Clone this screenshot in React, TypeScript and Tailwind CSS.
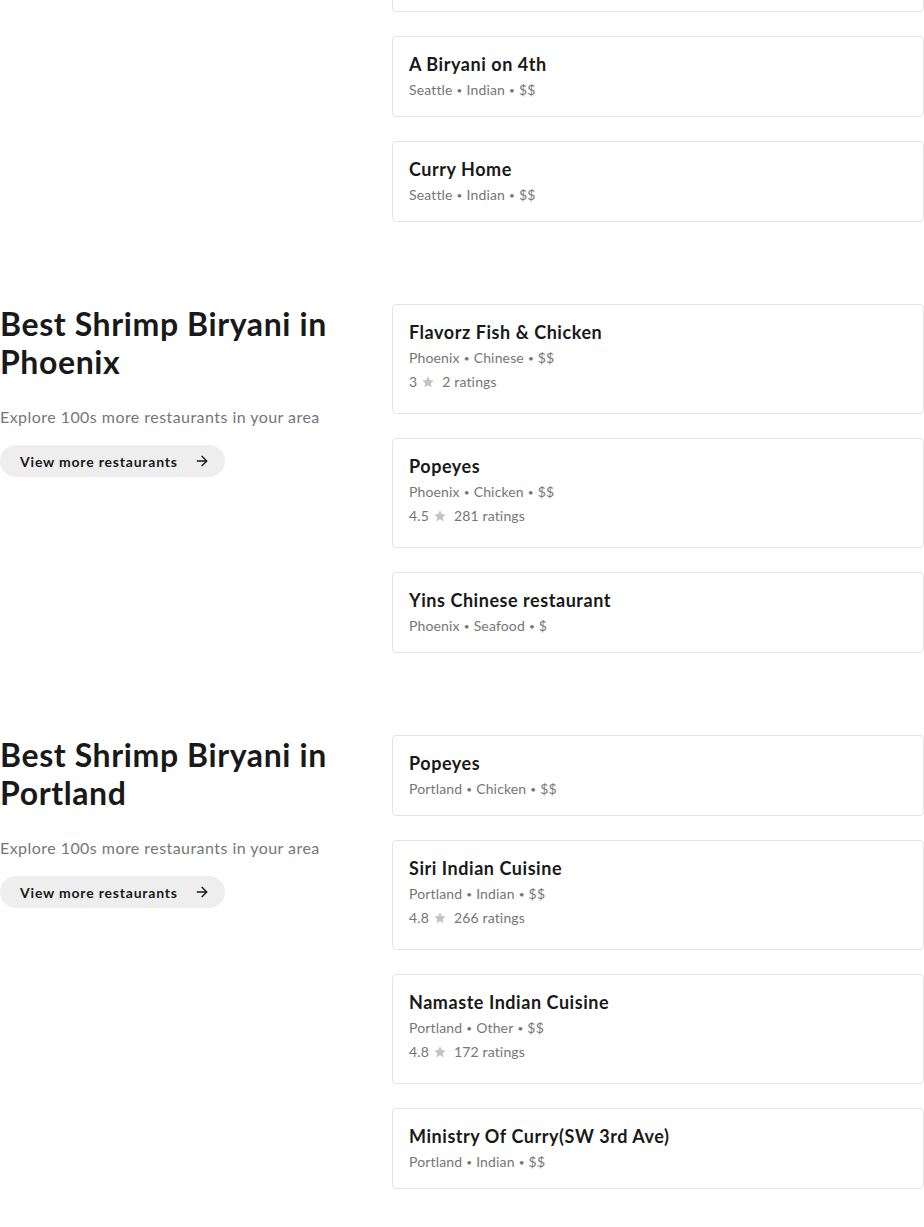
import React from "react";
import { ArrowRight } from "lucide-react";

type Store = {
  name: string;
  city: string;
  cuisine: string;
  price: string;
  rating?: string;
  count?: number;
};

type Section = {
  city: string;
  stores: Store[];
};

const sections: Section[] = [
  {
    city: "Seattle",
    stores: [
      { name: "Spice Route", city: "Seattle", cuisine: "Indian", price: "$$" },
      { name: "Biryani Bowl", city: "Seattle", cuisine: "Indian", price: "$$" },
      { name: "A Biryani on 4th", city: "Seattle", cuisine: "Indian", price: "$$" },
      { name: "Curry Home", city: "Seattle", cuisine: "Indian", price: "$$" },
    ],
  },
  {
    city: "Phoenix",
    stores: [
      { name: "Flavorz Fish & Chicken", city: "Phoenix", cuisine: "Chinese", price: "$$", rating: "3", count: 2 },
      { name: "Popeyes", city: "Phoenix", cuisine: "Chicken", price: "$$", rating: "4.5", count: 281 },
      { name: "Yins Chinese restaurant", city: "Phoenix", cuisine: "Seafood", price: "$" },
    ],
  },
  {
    city: "Portland",
    stores: [
      { name: "Popeyes", city: "Portland", cuisine: "Chicken", price: "$$" },
      { name: "Siri Indian Cuisine", city: "Portland", cuisine: "Indian", price: "$$", rating: "4.8", count: 266 },
      { name: "Namaste Indian Cuisine", city: "Portland", cuisine: "Other", price: "$$", rating: "4.8", count: 172 },
      { name: "Ministry Of Curry(SW 3rd Ave)", city: "Portland", cuisine: "Indian", price: "$$" },
    ],
  },
];

function Star() {
  return (
    <svg viewBox="0 0 24 24" className="w-[14px] h-[14px] fill-[#c4c4c4]">
      <path d="M12 2.2l3 6.2 6.8.9-5 4.7 1.3 6.8L12 17.5l-6.1 3.3 1.3-6.8-5-4.7 6.8-.9z" />
    </svg>
  );
}

function Dot() {
  return <span className="mx-[4px] text-[10px] align-[1px]">•</span>;
}

function StoreCard({ store }: { store: Store }) {
  return (
    <div className="border border-[#e4e4e4] rounded-[4px] px-4 pt-[15px] pb-4 bg-white">
      <div className="text-[18px] leading-6 font-bold text-[#191919] tracking-[0.55px]">{store.name}</div>
      <div className="mt-1 text-[14px] leading-5 text-[#767676] tracking-[0.15px]">
        {store.city}
        <Dot />
        {store.cuisine}
        <Dot />
        {store.price}
      </div>
      {store.rating && (
        <div className="mt-1 mb-[5px] flex items-center text-[14px] leading-5 text-[#767676] tracking-[0.15px]">
          <span>{store.rating}</span>
          <span className="ml-[4px]">
            <Star />
          </span>
          <span className="ml-[7px]">{store.count} ratings</span>
        </div>
      )}
    </div>
  );
}

export default function App() {
  return (
    <div className="w-[924px] h-[1227px] overflow-hidden bg-white" style={{ fontFamily: "Lato, 'Open Sans', sans-serif" }}>
      <div className="-mt-[174px] flex flex-col gap-[82px]">
        {sections.map((s) => (
          <section key={s.city} className="flex">
            <div className="w-[392px] shrink-0">
              <h2 className="text-[32px] leading-[38px] font-bold text-[#191919] pt-px tracking-[0.6px]">
                Best Shrimp Biryani in {s.city}
              </h2>
              <p className="mt-6 text-[16px] leading-6 text-[#767676] tracking-[0.45px]">
                Explore 100s more restaurants in your area
              </p>
              <button className="mt-4 h-8 w-[225px] rounded-full bg-[#eeeeee] flex items-center justify-between pl-5 pr-[15px] whitespace-nowrap">
                <span className="text-[14px] font-bold text-[#191919] tracking-[0.8px]">View more restaurants</span>
                <ArrowRight className="w-4 h-4 text-[#191919]" strokeWidth={2} />
              </button>
            </div>
            <div className="flex-1 flex flex-col gap-6">
              {s.stores.map((st, i) => (
                <StoreCard key={i} store={st} />
              ))}
            </div>
          </section>
        ))}
      </div>
    </div>
  );
}
